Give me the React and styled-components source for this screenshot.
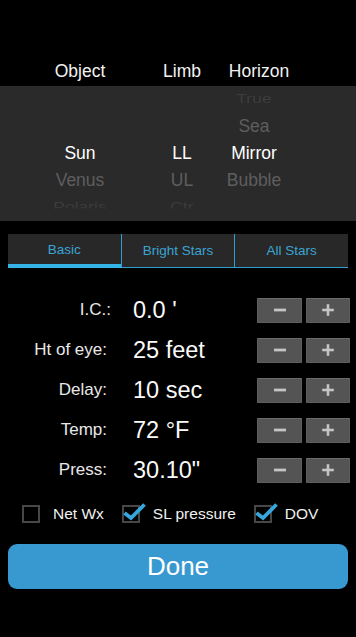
import React from 'react'
import styled, { createGlobalStyle, css } from 'styled-components'

const GlobalStyle = createGlobalStyle`
  html, body {
    margin: 0;
    padding: 0;
    background: #000;
  }
  body {
    width: 356px;
    height: 637px;
    overflow: hidden;
    font-family: "Liberation Sans", Arial, sans-serif;
    color: #fff;
  }
`

const COLUMNS = [
  { key: 'object', title: 'Object', items: ['', '', 'Sun', 'Venus', 'Polaris'] },
  { key: 'limb', title: 'Limb', items: ['', '', 'LL', 'UL', 'Ctr'] },
  { key: 'horizon', title: 'Horizon', items: ['True', 'Sea', 'Mirror', 'Bubble', ''], shift: 10 }
]

const TABS = ['Basic', 'Bright Stars', 'All Stars']

const SETTINGS = [
  { label: 'I.C.:', value: "0.0 '", nudge: 4 },
  { label: 'Ht of eye:', value: '25 feet' },
  { label: 'Delay:', value: '10 sec' },
  { label: 'Temp:', value: '72 °F' },
  { label: 'Press:', value: '30.10"' }
]

const OPTIONS = [
  { label: 'Net Wx', checked: false },
  { label: 'SL pressure', checked: true },
  { label: 'DOV', checked: true }
]

const App = () => {
  return (
    <Screen>
      <GlobalStyle />
      <HeaderRow>
        {COLUMNS.map(col => (
          <HeaderCell key={col.key} $shift={col.shift}>{col.title}</HeaderCell>
        ))}
      </HeaderRow>

      <Picker>
        {COLUMNS.map(col => (
          <Wheel key={col.key}>
            {col.items.map((item, i) => (
              <WheelItem key={i} $distance={Math.abs(i - 2)} $below={i > 2}>
                {item}
              </WheelItem>
            ))}
          </Wheel>
        ))}
      </Picker>

      <TabBar>
        {TABS.map((tab, i) => (
          <Tab key={tab} $active={i === 0} $first={i === 0}>
            {tab}
          </Tab>
        ))}
      </TabBar>

      <Settings>
        {SETTINGS.map(s => (
          <SettingRow key={s.label}>
            <Label $nudge={s.nudge}>{s.label}</Label>
            <Value>{s.value}</Value>
            <StepButton aria-label='decrease'>
              <svg width='14' height='14' viewBox='0 0 14 14'>
                <rect x='1' y='5.6' width='12' height='2.8' fill='#c4c4c4' />
              </svg>
            </StepButton>
            <StepButton aria-label='increase'>
              <svg width='14' height='14' viewBox='0 0 14 14'>
                <rect x='1.2' y='5.7' width='11.6' height='2.6' fill='#c4c4c4' />
                <rect x='5.7' y='1.2' width='2.6' height='11.6' fill='#c4c4c4' />
              </svg>
            </StepButton>
          </SettingRow>
        ))}
      </Settings>

      <OptionRow>
        {OPTIONS.map(opt => (
          <Option key={opt.label}>
            <Box>
              {opt.checked && (
                <CheckMark width='24' height='20' viewBox='0 0 24 20'>
                  <path d='M1.5 12 L8 17 L21.5 3.5' fill='none' stroke='#37a6dc' strokeWidth='3.8' />
                </CheckMark>
              )}
            </Box>
            <OptionText>{opt.label}</OptionText>
          </Option>
        ))}
      </OptionRow>

      <DoneButton>Done</DoneButton>
    </Screen>
  )
}

const Screen = styled.div`
  width: 356px;
  height: 637px;
  background: #000;
  display: flex;
  flex-direction: column;
`

const columnsTemplate = css`
  display: grid;
  grid-template-columns: 160px 44px 100px 1fr;
`

const HeaderRow = styled.div`
  ${columnsTemplate}
  height: 86px;
  box-sizing: border-box;
  padding-top: 60px;
  line-height: 22px;
`

const HeaderCell = styled.div`
  text-align: center;
  font-size: 17.5px;
  color: #f2f2f2;
  padding-left: ${props => props.$shift || 0}px;
`

const Picker = styled.div`
  ${columnsTemplate}
  height: 135px;
  background: #2a2a2b;
  overflow: hidden;
`

const Wheel = styled.div`
  display: flex;
  flex-direction: column;
`

const WheelItem = styled.div`
  height: 27px;
  line-height: 27px;
  text-align: center;
  font-size: 17.5px;
  white-space: nowrap;
  color: #ffffff;

  ${props =>
    props.$distance === 1 &&
    css`
      color: #5e5e5e;
    `}

  ${props =>
    props.$distance === 2 &&
    css`
      color: #3d3d3d;
      transform: scaleY(0.72);
    `}

  ${props =>
    props.$distance === 2 &&
    props.$below &&
    css`
      -webkit-mask-image: linear-gradient(to bottom, #000 45%, transparent 62%);
      mask-image: linear-gradient(to bottom, #000 45%, transparent 62%);
    `}
`

const TabBar = styled.div`
  display: flex;
  margin: 13px 8px 0;
  height: 34px;
`

const Tab = styled.div`
  flex: 1;
  display: flex;
  align-items: center;
  justify-content: center;
  box-sizing: border-box;
  background: #282828;
  color: #3ba4d3;
  font-size: 13.5px;
  border-bottom: 1px solid #2e9fd0;
  border-left: ${props => (props.$first ? 'none' : '1px solid #2e9fd0')};

  ${props =>
    props.$active &&
    css`
      border-bottom: 4px solid #33b3e6;
    `}
`

const Settings = styled.div`
  margin-top: 22px;
  display: flex;
  flex-direction: column;
`

const SettingRow = styled.div`
  display: grid;
  grid-template-columns: 107px 1fr 45px 44px;
  column-gap: 4px;
  align-items: center;
  height: 40px;
  padding-right: 6px;
`

const Label = styled.span`
  text-align: right;
  font-size: 17px;
  color: #e8e8e8;
  margin-right: ${props => -(props.$nudge || 0)}px;
`

const Value = styled.span`
  margin-left: 22px;
  font-size: 23.5px;
  color: #fafafa;
  white-space: nowrap;
`

const StepButton = styled.button`
  height: 25px;
  padding: 0;
  display: flex;
  align-items: center;
  justify-content: center;
  background: #545454;
  border: 1px solid #5e5e5e;
  border-top-color: #6c6c6c;
  border-radius: 1px;
`

const OptionRow = styled.div`
  display: flex;
  align-items: center;
  gap: 18px;
  height: 48px;
  padding-left: 22px;
`

const Option = styled.label`
  display: flex;
  align-items: center;
  gap: 13px;
`

const Box = styled.span`
  position: relative;
  width: 18px;
  height: 18px;
  box-sizing: border-box;
  border: 2px solid #474747;
`

const CheckMark = styled.svg`
  position: absolute;
  left: -1px;
  top: -6px;
  overflow: visible;
`

const OptionText = styled.span`
  font-size: 15.5px;
  color: #f0f0f0;
`

const DoneButton = styled.button`
  margin: 6px 8px 0;
  height: 45px;
  border: none;
  border-radius: 9px;
  background: #3899d0;
  color: #fff;
  font-family: "Liberation Sans", Arial, sans-serif;
  font-size: 26px;
`

export default App
